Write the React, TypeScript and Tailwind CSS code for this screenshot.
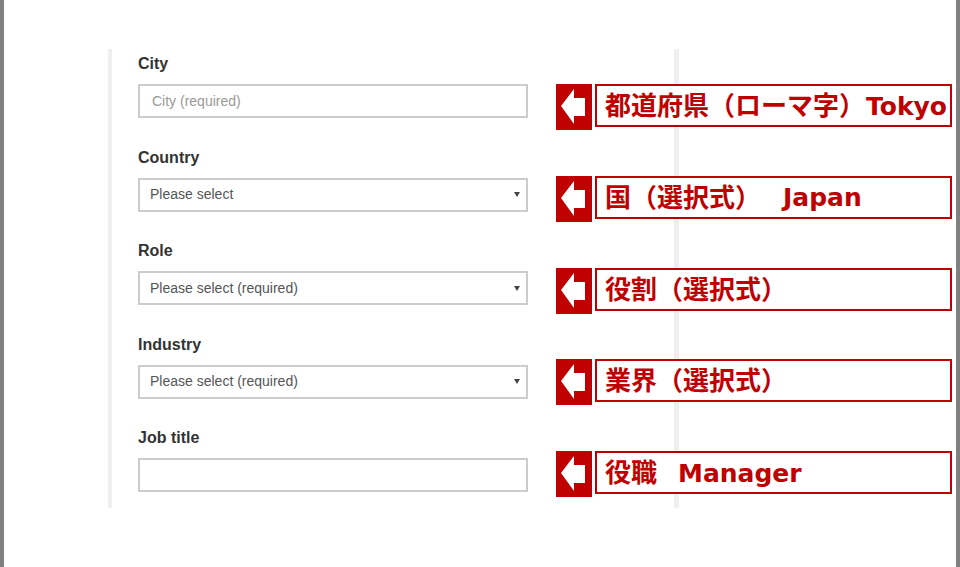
import React from 'react'

type Field = {
  label: string
  kind: 'input' | 'select'
  placeholder: string
}

type Note = {
  jp: string
  en?: string
  gap?: number
}

const fields: Field[] = [
  { label: 'City', kind: 'input', placeholder: 'City (required)' },
  { label: 'Country', kind: 'select', placeholder: 'Please select' },
  { label: 'Role', kind: 'select', placeholder: 'Please select (required)' },
  { label: 'Industry', kind: 'select', placeholder: 'Please select (required)' },
  { label: 'Job title', kind: 'input', placeholder: '' },
]

const notes: Note[] = [
  { jp: '都道府県（ローマ字）', en: 'Tokyo', gap: 1 },
  { jp: '国（選択式）', en: 'Japan', gap: 22 },
  { jp: '役割（選択式）' },
  { jp: '業界（選択式）' },
  { jp: '役職', en: 'Manager', gap: 21 },
]

function ArrowBox() {
  return (
    <div className="w-[36px] h-[46px] bg-[#c00000] shrink-0 flex items-center">
      <svg width="36" height="46" viewBox="0 0 36 46">
        <polygon points="5,22 18,5 18,14 29,14 29,32 18,32 18,40" fill="#ffffff" />
      </svg>
    </div>
  )
}

function Callout({ note }: { note: Note }) {
  return (
    <div className="flex gap-[3px] items-start">
      <ArrowBox />
      <div
        className="w-[357px] h-[43px] border-2 border-[#c00000] bg-white flex items-center pl-[8px] pt-[1px] font-bold text-[#c00000] whitespace-nowrap leading-none"
        style={{ fontFamily: '"DejaVu Sans", "Noto Sans CJK JP", sans-serif' }}
      >
        <span className="text-[26px]">{note.jp}</span>
        {note.en && (
          <span className="text-[25px]" style={{ marginLeft: note.gap }}>
            {note.en}
          </span>
        )}
      </div>
    </div>
  )
}

function FormField({ field, first }: { field: Field; first: boolean }) {
  return (
    <div className={first ? '' : 'mt-[29.5px]'}>
      <div className="text-[16px] font-bold text-[#333333] leading-[20px]">{field.label}</div>
      <div className="mt-[10px] w-[390px] h-[34px] border-2 border-[#cccccc] bg-white flex items-center text-[14px]">
        {field.kind === 'input' ? (
          <span className="pl-[12px] text-[#999999]">{field.placeholder}</span>
        ) : (
          <div className="flex items-center justify-between w-full pl-[10px] pr-[6px]">
            <span className="text-[#555555]">{field.placeholder}</span>
            <span className="w-0 h-0 border-l-[3px] border-r-[3px] border-t-[5px] border-l-transparent border-r-transparent border-t-[#444444]" />
          </div>
        )}
      </div>
    </div>
  )
}

export default function App() {
  return (
    <div
      className="w-[960px] h-[567px] bg-white border-l-4 border-r-4 border-[#808080] overflow-hidden"
      style={{ fontFamily: '"Liberation Sans", Arial, sans-serif' }}
    >
      <div className="pt-[49px] pl-[104px]">
        <div className="w-[571px] border-l-4 border-r-[5px] border-[#efefef] flex">
          {/* Form */}
          <div className="pl-[26px] pt-[5px] pb-[16px] shrink-0">
            {fields.map((f, i) => (
              <FormField key={f.label} field={f} first={i === 0} />
            ))}
          </div>

          {/* Annotations */}
          <div className="ml-[28px] pt-[35px] flex flex-col gap-[45.75px] shrink-0 relative">
            {notes.map((n) => (
              <Callout key={n.jp} note={n} />
            ))}
          </div>
        </div>
      </div>
    </div>
  )
}
